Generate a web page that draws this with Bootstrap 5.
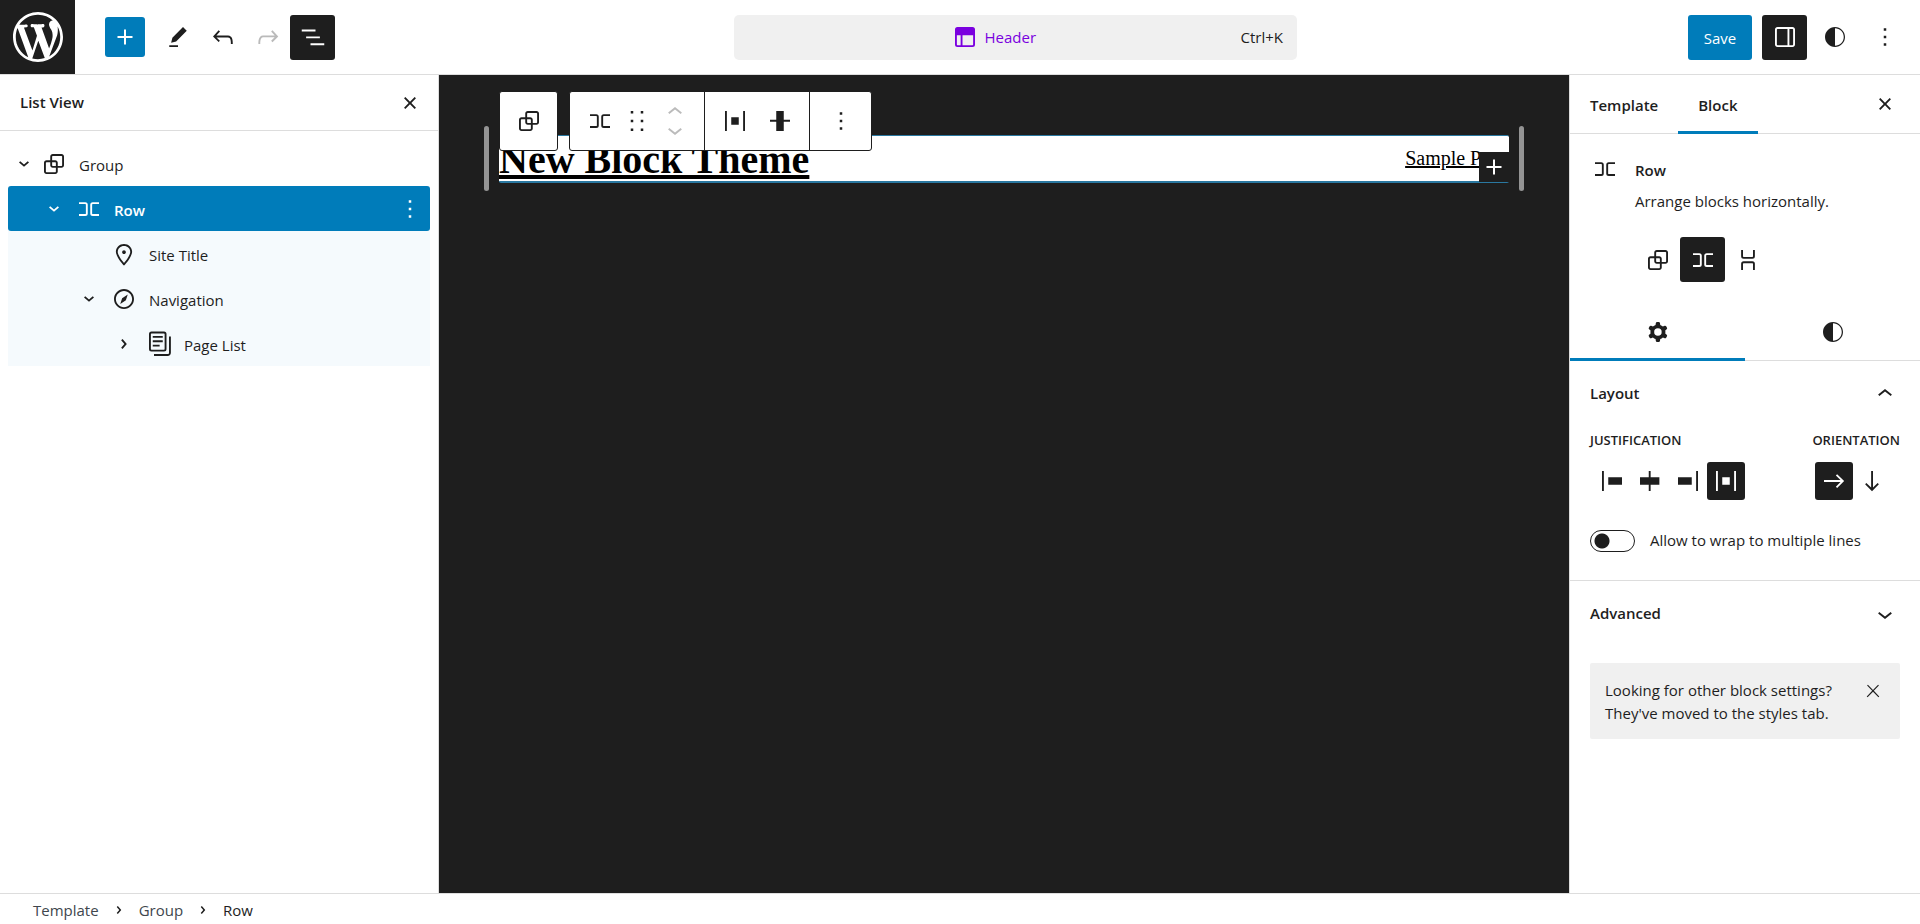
<!DOCTYPE html>
<html lang="en">
<head>
<meta charset="utf-8">
<meta name="viewport" content="width=device-width, initial-scale=1">
<title>Header – Editor</title>
<link href="https://cdn.jsdelivr.net/npm/bootstrap@5.3.0/dist/css/bootstrap.min.css" rel="stylesheet">
<style>
:root { --ink: #1e1e1e; --accent: #007cba; --line: #ddd; --soft: #f0f0f0; }
body { font-family: "Open Sans", "Noto Sans", sans-serif; font-size: 15px; line-height: 23px; color: var(--ink); background: #fff; }
.glyph { width: 30px; height: 30px; fill: currentColor; flex: none; display: block; }
.btn { --bs-btn-font-size: 15px; --bs-btn-line-height: 23px; --bs-btn-color: var(--ink); --bs-btn-hover-color: var(--accent); --bs-btn-active-border-color: transparent; --bs-btn-border-radius: 3px; --bs-btn-border-width: 0; --bs-btn-disabled-border-color: transparent; }
.tool { width: 45px; height: 45px; padding: 0; display: flex; align-items: center; justify-content: center; flex: none; }
.tool.tool-sm { width: 38px; height: 38px; }
.tool.tool-add { width: 40px; height: 40px; margin-right: 10px; }
.tool.is-on { background: var(--ink); color: #fff; }
.tool.is-blue, .btn-save { background: var(--accent); color: #fff; }
.tool:disabled { color: #1e1e1e; opacity: .3; }
.btn-save { height: 45px; width: 64px; padding: 2px 0 0; margin-right: 5px; }
.strong-ish { font-weight: 600; }

.topbar { height: 75px; border-bottom: 1px solid var(--line); padding-right: 13px; }
.brand-tile { width: 75px; height: 74px; background: var(--ink); color: #fff; }
.brand-tile svg { width: 60px; height: 60px; fill: currentColor; }
.tools-left { padding-left: 30px; }
.tools-right { gap: 5px; }
.command { width: 563px; height: 45px; background: var(--soft); border: 0; border-radius: 5px; padding: 0 14px 0 12px; color: var(--ink); }
.command .doc { color: #7a00df; }

.side-left { width: 439px; border-right: 1px solid var(--line); }
.side-head { height: 56px; border-bottom: 1px solid var(--line); padding: 0 6px 0 20px; }
.tree { padding: 10px 8px; }
.tree-row { height: 45px; }
.tree-row .btn { padding: 0; border-radius: 0; color: inherit; }
.tree-row .twist { width: 30px; height: 30px; flex: none; margin-right: 5px; }
.tree-row .tree-label { display: flex; flex-grow: 1; align-items: center; gap: 10px; text-align: left; }
.tree-row .tree-label span { padding-top: 3px; }
.tree-row .tool { width: 40px; }
.lvl-1 { padding-left: 1px; }
.lvl-1 .twist { margin-right: 0; }
.lvl-2 { padding-left: 31px; }
.lvl-3 { padding-left: 66px; }
.lvl-4 { padding-left: 101px; }
.tree-row.is-selected { background: var(--accent); color: #fff; border-radius: 3px; }
.tree-branch { background: #f5fafd; }

.canvas { background: var(--ink); padding: 51px 45px 0; }
.frame { gap: 10px; }
.grip { width: 5px; height: 65px; border-radius: 3px; background: #949494; flex: none; }
.sheet { background: #fff; height: 48px; border: solid #2a78a0; border-width: 1px 0 2px; border-radius: 2px; font-family: "Liberation Serif", serif; color: #000; }
.sheet a { color: #000; }
.site-name { font-size: 40px; line-height: 48px; font-weight: 700; margin: 0; text-decoration-thickness: 4px; }
.site-nav { font-size: 20px; line-height: 45px; }
.block-tools { top: -45px; left: 0; gap: 11px; color: var(--ink); }
.tool-box { background: #fff; border: 1px solid var(--ink); border-radius: 3px; height: 60px; }
.tool-box > div { display: flex; align-items: center; padding: 0 7px; }
.tool-box > div:only-child { padding: 0 6px; }
.tool-box > div + div { border-left: 1px solid var(--ink); }
.tool-box > div + div:last-child { padding: 0 8px; }
.tool-box .tool { color: var(--ink); }
.tool-box .drag { width: 30px; }
.tool-box .movers { width: 45px; }
.movers .btn { height: 18px; width: 45px; padding: 0; display: flex; justify-content: center; align-items: center; color: #bbb; }
.appender { right: 0; bottom: -1px; width: 30px; height: 30px; padding: 0; background: var(--ink); color: #fff; border-radius: 0; }

.side-right { width: 351px; border-left: 1px solid var(--line); }
.panel-tabs { height: 59px; border-bottom: 1px solid var(--line); padding-right: 13px; }
.panel-tabs .tab, .sub-tabs .tab { border: 0; border-radius: 0; border-bottom: 3px solid transparent; }
.panel-tabs .tab { height: 59px; padding: 5px 20px 0; }
.panel-tabs .tab.is-current, .sub-tabs .tab.is-current { border-bottom: 3px solid var(--accent); }
.block-card { padding: 20px 20px 0; gap: 15px; }
.block-card h2 { font-size: 15px; line-height: 32px; margin: 0; }
.block-card p { margin: 1px 0 0; line-height: 28px; }
.variations { padding: 22px 65px 20px; }
.sub-tabs { height: 59px; border-bottom: 1px solid var(--line); }
.sub-tabs .tab { height: 59px; padding: 3px 0 0; }
.panel-title { font-size: 15px; margin: 0; }
.panel-title .btn { width: 100%; height: 65px; padding: 0 20px; display: flex; align-items: center; justify-content: space-between; }
.panel-body { border-bottom: 1px solid var(--line); }
.caption { font-size: 13px; line-height: 20px; font-weight: 600; float: none; margin: 0; padding: 4px 0 12px; white-space: nowrap; }
.choice { padding-left: 3px; }
.wrap-switch { padding: 29px 20px 28px; gap: 15px; }
.wrap-switch .form-check-input { width: 45px; height: 22px; margin: 0; float: none; border: 1px solid var(--ink); border-radius: 11px; background: radial-gradient(circle at 11px 10px, var(--ink) 7px, transparent 8px); }
.tip { background: var(--soft); margin: 17px 20px; padding: 16px 15px 14px; border-radius: 2px; }
.tip .btn { width: 24px; height: 24px; padding: 0; display: flex; align-items: center; justify-content: center; }
.tip svg { width: 20px; height: 20px; }

.crumb-bar { height: 31px; border-top: 1px solid var(--line); padding: 4px 33px 0; }
.crumb-bar ol { margin: 0; padding: 0; list-style: none; display: flex; align-items: center; }
.crumb-bar .btn { padding: 0; display: block; color: #40464d; }
.crumb-bar .glyph { width: 30px; height: 24px; margin: 0 5px; }
</style>
</head>
<body class="vh-100 d-flex flex-column overflow-hidden">

<svg class="d-none" aria-hidden="true">
  <symbol id="i-plus" viewBox="0 0 24 24"><path d="M18 11.2h-5.2V6h-1.6v5.2H6v1.6h5.2V18h1.6v-5.2H18z"/></symbol>
  <symbol id="i-edit" viewBox="0 0 24 24"><path d="m19 7-3-3-8.500 8.500-1 4 4-1L19 7Zm-7 11.500H5V20h7v-1.500Z"/></symbol>
  <symbol id="i-undo" viewBox="0 0 24 24"><path d="M18.3 11.7c-.6-.6-1.4-.9-2.3-.9H6.700l2.900-3.300-1.100-1-4.500 5L8.500 16l1-1-2.700-2.700H16c.5 0 .9.2 1.300.5 1 1 1 3.400 1 4.500v.3h1.500v-.2c0-1.500 0-4.300-1.500-5.700z"/></symbol>
  <symbol id="i-redo" viewBox="0 0 24 24"><path d="M15.600 6.500l-1.100 1 2.900 3.300H8c-.9 0-1.700.3-2.300.9-1.400 1.500-1.400 4.200-1.400 5.600v.2h1.500v-.3c0-1.100 0-3.500 1-4.500.3-.3.7-.5 1.300-.5h9.200L14.500 15l1.100 1.100 4.600-4.600-4.600-5z"/></symbol>
  <symbol id="i-list" viewBox="0 0 24 24"><path d="M3 6h11v1.500H3V6Zm3.500 5.500h11V13h-11v-1.500ZM21 17H10v1.500h11V17Z"/></symbol>
  <symbol id="i-close" viewBox="0 0 24 24"><path d="M12 13.060l3.712 3.713 1.061-1.060L13.061 12l3.712-3.712-1.060-1.060L12 10.938 8.288 7.227l-1.061 1.060L10.939 12l-3.712 3.712 1.060 1.061L12 13.061z"/></symbol>
  <symbol id="i-close-thin" viewBox="0 0 24 24"><path d="M13 11.800l6.100-6.300-1-1-6.100 6.200-6.100-6.200-1 1 6.100 6.300-6.500 6.700 1 1 6.500-6.600 6.500 6.600 1-1z"/></symbol>
  <symbol id="i-group" viewBox="0 0 24 24"><path d="M18 4h-7c-1.100 0-2 .9-2 2v3H6c-1.100 0-2 .9-2 2v7c0 1.100.9 2 2 2h7c1.100 0 2-.9 2-2v-3h3c1.100 0 2-.9 2-2V6c0-1.100-.9-2-2-2zm-4.500 14c0 .3-.2.5-.5.5H6c-.3 0-.5-.2-.5-.5v-7c0-.3.2-.5.5-.5h3V13c0 1.100.9 2 2 2h2.500v3zm0-4.500H11c-.3 0-.5-.2-.5-.5v-2.500H13c.3 0 .5.2.5.5v2.500zm5-.5c0 .3-.2.5-.5.5h-3V11c0-1.100-.9-2-2-2h-2.500V6c0-.3.2-.5.5-.5h7c.3 0 .5.2.5.5v7z"/></symbol>
  <symbol id="i-row" viewBox="0 0 24 24"><path d="M4 6.500h5a2 2 0 0 1 2 2v7a2 2 0 0 1-2 2H4V16h5a.5.5 0 0 0 .5-.5v-7A.5.5 0 0 0 9 8H4V6.500Zm16 0h-5a2 2 0 0 0-2 2v7a2 2 0 0 0 2 2h5V16h-5a.5.5 0 0 1-.5-.5v-7A.5.5 0 0 1 15 8h5V6.500Z"/></symbol>
  <symbol id="i-stack" viewBox="0 0 24 24"><path d="M17.500 4v5a2 2 0 0 1-2 2h-7a2 2 0 0 1-2-2V4H8v5a.5.5 0 0 0 .5.5h7A.5.5 0 0 0 16 9V4h1.500Zm0 16v-5a2 2 0 0 0-2-2h-7a2 2 0 0 0-2 2v5H8v-5a.5.5 0 0 1 .5-.5h7a.5.5 0 0 1 .5.5v5h1.500Z"/></symbol>
  <symbol id="i-marker" viewBox="0 0 24 24"><path d="M12 9c-.8 0-1.500.7-1.500 1.500S11.200 12 12 12s1.500-.7 1.500-1.500S12.800 9 12 9zm0-5c-3.600 0-6.500 2.800-6.500 6.200 0 .8.3 1.800.9 3.100.5 1.100 1.200 2.300 2 3.600.7 1 3 3.800 3.200 3.900l.4.5.4-.5c.2-.2 2.600-2.900 3.200-3.900.8-1.200 1.500-2.500 2-3.600.6-1.300.9-2.300.9-3.100C18.500 6.800 15.600 4 12 4zm4.300 8.700c-.5 1-1.100 2.200-1.900 3.400-.5.7-1.700 2.200-2.400 3-.7-.8-1.900-2.300-2.400-3-.8-1.200-1.400-2.300-1.900-3.300-.6-1.400-.7-2.200-.7-2.500 0-2.600 2.200-4.700 5-4.700s5 2.100 5 4.700c0 .2-.1 1-.7 2.400z"/></symbol>
  <symbol id="i-compass" viewBox="0 0 24 24"><path d="M12 4c-4.400 0-8 3.600-8 8s3.600 8 8 8 8-3.600 8-8-3.600-8-8-8zm0 14.500c-3.600 0-6.500-2.900-6.500-6.500S8.400 5.500 12 5.500s6.500 2.900 6.500 6.500-2.900 6.500-6.500 6.500zM9 16l4.500-3L15 8.400l-4.500 3L9 16z"/></symbol>
  <symbol id="i-pages" viewBox="0 0 24 24"><path d="M15 5.500H7V7h8V5.500ZM7 9h8v1.500H7V9Zm5.500 3.500H7V14h5.500v-1.500Z"/><path fill-rule="evenodd" d="M16 2H6a2 2 0 0 0-2 2v12a2 2 0 0 0 2 2h10a2 2 0 0 0 2-2V4a2 2 0 0 0-2-2ZM6 3.500h10a.5.5 0 0 1 .5.5v12a.5.5 0 0 1-.5.5H6a.5.5 0 0 1-.5-.5V4a.5.5 0 0 1 .5-.5Z"/><path d="M20 6v13c0 .69-.31 1-.999 1H8v1.500h11.001c1.520 0 2.499-.982 2.499-2.500V6H20Z"/></symbol>
  <symbol id="i-drag" viewBox="0 0 24 24"><path d="M7 6h2V4H7v2zm0 7h2v-2H7v2zm0 7h2v-2H7v2zm8-16v2h2V4h-2zm0 9h2v-2h-2v2zm0 7h2v-2h-2v2z"/></symbol>
  <symbol id="i-more" viewBox="0 0 24 24"><path d="M13 19h-2v-2h2v2zm0-6h-2v-2h2v2zm0-6h-2V5h2v2z"/></symbol>
  <symbol id="i-up" viewBox="0 0 24 24"><path d="M6.500 12.400L12 8l5.500 4.400-.9 1.200L12 10l-4.500 3.600-1-1.200z"/></symbol>
  <symbol id="i-down" viewBox="0 0 24 24"><path d="M17.500 11.600L12 16l-5.500-4.400.9-1.200L12 14l4.500-3.600 1 1.200z"/></symbol>
  <symbol id="i-right-s" viewBox="0 0 24 24"><path d="M10.862 8.040L14.280 12.029L10.862 16.017L9.723 15.040L12.305 12.029L9.723 9.017L10.862 8.040Z"/></symbol>
  <symbol id="i-down-s" viewBox="0 0 24 24"><path d="M15.988 10.862L12 14.280L8.012 10.862L8.988 9.723L12 12.305L15.012 9.723L15.988 10.862Z"/></symbol>
  <symbol id="i-jleft" viewBox="0 0 24 24"><path d="M9 9v6h11V9H9zM4 20h1.500V4H4v16z"/></symbol>
  <symbol id="i-jcenter" viewBox="0 0 24 24"><path d="M12.500 15v5H11v-5H4V9h7V4h1.500v5h7v6h-7Z"/></symbol>
  <symbol id="i-jright" viewBox="0 0 24 24"><path d="M4 15h11V9H4v6zM18.500 4v16H20V4h-1.500z"/></symbol>
  <symbol id="i-between" viewBox="0 0 24 24"><path d="M9 15h6V9H9v6zm-5 5h1.500V4H4v16zM18.500 4v16H20V4h-1.500z"/></symbol>
  <symbol id="i-middle" viewBox="0 0 24 24"><path d="M20 11h-5V4H9v7H4v1.500h5V20h6v-7.500h5z"/></symbol>
  <symbol id="i-header" viewBox="0 0 24 24"><path fill-rule="evenodd" d="M18.500 10.500H10v8h8a.5.5 0 0 0 .5-.5v-7.500zm-10 0h-3V18a.5.5 0 0 0 .5.5h2.500v-8zM6 4h12a2 2 0 0 1 2 2v12a2 2 0 0 1-2 2H6a2 2 0 0 1-2-2V6a2 2 0 0 1 2-2z"/></symbol>
  <symbol id="i-drawer" viewBox="0 0 24 24"><path d="M18 4H6c-1.100 0-2 .9-2 2v12c0 1.100.9 2 2 2h12c1.100 0 2-.9 2-2V6c0-1.100-.9-2-2-2zm-4 14.500H6c-.3 0-.5-.2-.5-.5V6c0-.3.2-.5.5-.5h8v13zm4.500-.5c0 .3-.2.5-.5.5h-2.500v-13H18c.3 0 .5.2.5.5v12z"/></symbol>
  <symbol id="i-styles" viewBox="0 0 24 24"><path d="M12 4c-4.400 0-8 3.600-8 8s3.600 8 8 8 8-3.600 8-8-3.600-8-8-8zm0 15V5c3.900 0 7 3.100 7 7s-3.100 7-7 7z"/></symbol>
  <symbol id="i-cog" viewBox="0 0 24 24"><path fill-rule="evenodd" d="M10.289 4.836A1 1 0 0 1 11.275 4h1.306a1 1 0 0 1 .987.836l.244 1.466c.787.26 1.503.679 2.108 1.218l1.393-.522a1 1 0 0 1 1.216.437l.653 1.130a1 1 0 0 1-.23 1.273l-1.148.944a6.025 6.025 0 0 1 0 2.435l1.149.946a1 1 0 0 1 .23 1.272l-.653 1.130a1 1 0 0 1-1.216.437l-1.394-.522c-.605.54-1.320.958-2.108 1.218l-.244 1.466a1 1 0 0 1-.987.836h-1.306a1 1 0 0 1-.986-.836l-.244-1.466a5.995 5.995 0 0 1-2.108-1.218l-1.394.522a1 1 0 0 1-1.217-.436l-.653-1.131a1 1 0 0 1 .23-1.272l1.149-.946a6.026 6.026 0 0 1 0-2.435l-1.148-.944a1 1 0 0 1-.23-1.272l.653-1.131a1 1 0 0 1 1.217-.437l1.393.522a5.994 5.994 0 0 1 2.108-1.218l.244-1.466zM14.929 12a3 3 0 1 1-6 0 3 3 0 0 1 6 0z"/></symbol>
  <symbol id="i-aright" viewBox="0 0 24 24"><path d="m14.500 6.500-1 1 3.700 3.700H4v1.600h13.200l-3.700 3.700 1 1 5.600-5.500z"/></symbol>
  <symbol id="i-adown" viewBox="0 0 24 24"><path d="m16.500 13.500-3.700 3.700V4h-1.500v13.200l-3.800-3.700-1 1 5.500 5.600 5.500-5.600z"/></symbol>
  <symbol id="i-wp" viewBox="-2 -2 24 24"><path d="M20 10c0-5.510-4.490-10-10-10C4.480 0 0 4.490 0 10c0 5.520 4.480 10 10 10 5.510 0 10-4.480 10-10zM7.780 15.370L4.370 6.220c.55-.02 1.170-.08 1.170-.08.5-.06.44-1.130-.06-1.110 0 0-1.450.11-2.370.11-.18 0-.37 0-.58-.01C4.120 2.690 6.870 1.110 10 1.110c2.330 0 4.450.87 6.050 2.340-.68-.11-1.650.39-1.650 1.580 0 .74.45 1.360.9 2.100.35.61.55 1.360.55 2.460 0 1.490-1.400 5-1.400 5l-3.030-8.370c.54-.02.82-.17.82-.17.5-.05.44-1.250-.06-1.220 0 0-1.440.12-2.380.12-.87 0-2.330-.12-2.330-.12-.5-.03-.56 1.200-.06 1.220l.92.08 1.260 3.410zM17.410 10c.24-.64.74-1.870.43-4.250.7 1.290 1.050 2.710 1.050 4.250 0 3.290-1.730 6.240-4.400 7.780.97-2.590 1.940-5.200 2.920-7.780zM6.100 18.090C3.120 16.650 1.110 13.530 1.110 10c0-1.300.23-2.480.72-3.590C3.250 10.300 4.670 14.200 6.100 18.090zm4.030-6.630l2.580 6.980c-.86.29-1.760.45-2.710.45-.79 0-1.570-.11-2.290-.33.81-2.380 1.620-4.740 2.420-7.100z"/></symbol>
</svg>

<header class="topbar d-flex align-items-center flex-shrink-0">
  <a href="#" class="brand-tile d-flex align-items-center justify-content-center flex-shrink-0" aria-label="Open navigation"><svg><use href="#i-wp"/></svg></a>
  <div class="tools-left d-flex align-items-center">
    <button type="button" class="btn tool tool-add is-blue" aria-label="Toggle block inserter"><svg class="glyph"><use href="#i-plus"/></svg></button>
    <button type="button" class="btn tool" aria-label="Tools"><svg class="glyph"><use href="#i-edit"/></svg></button>
    <button type="button" class="btn tool" aria-label="Undo"><svg class="glyph"><use href="#i-undo"/></svg></button>
    <button type="button" class="btn tool" aria-label="Redo" disabled><svg class="glyph"><use href="#i-redo"/></svg></button>
    <button type="button" class="btn tool is-on" aria-label="List View"><svg class="glyph"><use href="#i-list"/></svg></button>
  </div>
  <div class="flex-grow-1 d-flex justify-content-center ps-3 pe-2">
    <button type="button" class="command d-flex align-items-center">
      <span class="doc flex-grow-1 d-flex align-items-center justify-content-center gap-1"><svg class="glyph"><use href="#i-header"/></svg><span>Header</span></span>
      <span>Ctrl+K</span>
    </button>
  </div>
  <div class="tools-right d-flex align-items-center">
    <button type="button" class="btn btn-save">Save</button>
    <button type="button" class="btn tool is-on" aria-label="Settings"><svg class="glyph"><use href="#i-drawer"/></svg></button>
    <button type="button" class="btn tool" aria-label="Styles"><svg class="glyph"><use href="#i-styles"/></svg></button>
    <button type="button" class="btn tool" aria-label="Options"><svg class="glyph"><use href="#i-more"/></svg></button>
  </div>
</header>

<div class="d-flex flex-grow-1 overflow-hidden">
  <aside class="side-left flex-shrink-0">
    <div class="side-head d-flex align-items-center justify-content-between">
      <span class="strong-ish">List View</span>
      <button type="button" class="btn tool" aria-label="Close"><svg class="glyph"><use href="#i-close"/></svg></button>
    </div>
    <ul class="tree list-unstyled mb-0">
      <li>
        <div class="tree-row lvl-1 d-flex align-items-center">
          <button type="button" class="btn twist" aria-label="Collapse Group"><svg class="glyph"><use href="#i-down-s"/></svg></button>
          <button type="button" class="btn tree-label"><svg class="glyph"><use href="#i-group"/></svg><span>Group</span></button>
        </div>
        <ul class="list-unstyled tree-branch">
          <li>
            <div class="tree-row lvl-2 is-selected d-flex align-items-center">
              <button type="button" class="btn twist" aria-label="Collapse Row"><svg class="glyph"><use href="#i-down-s"/></svg></button>
              <button type="button" class="btn tree-label strong-ish"><svg class="glyph"><use href="#i-row"/></svg><span>Row</span></button>
              <button type="button" class="btn tool" aria-label="Options for Row"><svg class="glyph"><use href="#i-more"/></svg></button>
            </div>
            <ul class="list-unstyled">
              <li>
                <div class="tree-row lvl-3 d-flex align-items-center">
                  <div class="twist"></div>
                  <button type="button" class="btn tree-label"><svg class="glyph"><use href="#i-marker"/></svg><span>Site Title</span></button>
                </div>
              </li>
              <li>
                <div class="tree-row lvl-3 d-flex align-items-center">
                  <button type="button" class="btn twist" aria-label="Collapse Navigation"><svg class="glyph"><use href="#i-down-s"/></svg></button>
                  <button type="button" class="btn tree-label"><svg class="glyph"><use href="#i-compass"/></svg><span>Navigation</span></button>
                </div>
                <ul class="list-unstyled">
                  <li>
                    <div class="tree-row lvl-4 d-flex align-items-center">
                      <button type="button" class="btn twist" aria-label="Expand Page List"><svg class="glyph"><use href="#i-right-s"/></svg></button>
                      <button type="button" class="btn tree-label"><svg class="glyph"><use href="#i-pages"/></svg><span>Page List</span></button>
                    </div>
                  </li>
                </ul>
              </li>
            </ul>
          </li>
        </ul>
      </li>
    </ul>
  </aside>

  <main class="canvas flex-grow-1">
    <div class="frame d-flex align-items-center justify-content-between">
      <div class="grip"></div>
      <div class="sheet position-relative flex-grow-1 d-flex justify-content-between">
        <h1 class="site-name"><a href="#">New Block Theme</a></h1>
        <nav class="site-nav"><a href="#">Sample Page</a></nav>
        <div class="block-tools position-absolute d-flex">
          <div class="tool-box d-flex">
            <div><button type="button" class="btn tool" aria-label="Select Group"><svg class="glyph"><use href="#i-group"/></svg></button></div>
          </div>
          <div class="tool-box d-flex">
            <div>
              <button type="button" class="btn tool" aria-label="Row"><svg class="glyph"><use href="#i-row"/></svg></button>
              <button type="button" class="btn tool drag" aria-label="Drag"><svg class="glyph"><use href="#i-drag"/></svg></button>
              <div class="movers">
                <button type="button" class="btn" aria-label="Move up"><svg class="glyph"><use href="#i-up"/></svg></button>
                <button type="button" class="btn" aria-label="Move down"><svg class="glyph"><use href="#i-down"/></svg></button>
              </div>
            </div>
            <div>
              <button type="button" class="btn tool" aria-label="Change items justification"><svg class="glyph"><use href="#i-between"/></svg></button>
              <button type="button" class="btn tool" aria-label="Align"><svg class="glyph"><use href="#i-middle"/></svg></button>
            </div>
            <div><button type="button" class="btn tool" aria-label="Options"><svg class="glyph"><use href="#i-more"/></svg></button></div>
          </div>
        </div>
        <button type="button" class="btn appender position-absolute" aria-label="Add block"><svg class="glyph"><use href="#i-plus"/></svg></button>
      </div>
      <div class="grip"></div>
    </div>
  </main>

  <aside class="side-right flex-shrink-0">
    <div class="panel-tabs d-flex align-items-center">
      <button type="button" class="btn tab strong-ish">Template</button>
      <button type="button" class="btn tab is-current strong-ish">Block</button>
      <button type="button" class="btn tool ms-auto" aria-label="Close Settings"><svg class="glyph"><use href="#i-close"/></svg></button>
    </div>
    <div class="block-card d-flex">
      <svg class="glyph"><use href="#i-row"/></svg>
      <div>
        <h2 class="strong-ish">Row</h2>
        <p>Arrange blocks horizontally.</p>
      </div>
    </div>
    <div class="variations d-flex">
      <button type="button" class="btn tool" aria-label="Group"><svg class="glyph"><use href="#i-group"/></svg></button>
      <button type="button" class="btn tool is-on" aria-label="Row"><svg class="glyph"><use href="#i-row"/></svg></button>
      <button type="button" class="btn tool" aria-label="Stack"><svg class="glyph"><use href="#i-stack"/></svg></button>
    </div>
    <div class="sub-tabs d-flex">
      <button type="button" class="btn tab is-current w-50 d-flex align-items-center justify-content-center" aria-label="Settings"><svg class="glyph"><use href="#i-cog"/></svg></button>
      <button type="button" class="btn tab w-50 d-flex align-items-center justify-content-center" aria-label="Styles"><svg class="glyph"><use href="#i-styles"/></svg></button>
    </div>
    <section class="panel-body">
      <h2 class="panel-title"><button type="button" class="btn strong-ish">Layout<svg class="glyph"><use href="#i-up"/></svg></button></h2>
      <div class="d-flex justify-content-between px-3 mx-1">
        <fieldset>
          <legend class="caption">JUSTIFICATION</legend>
          <div class="choice d-flex">
            <button type="button" class="btn tool tool-sm" aria-label="Justify items left"><svg class="glyph"><use href="#i-jleft"/></svg></button>
            <button type="button" class="btn tool tool-sm" aria-label="Justify items center"><svg class="glyph"><use href="#i-jcenter"/></svg></button>
            <button type="button" class="btn tool tool-sm" aria-label="Justify items right"><svg class="glyph"><use href="#i-jright"/></svg></button>
            <button type="button" class="btn tool tool-sm is-on" aria-label="Space between items"><svg class="glyph"><use href="#i-between"/></svg></button>
          </div>
        </fieldset>
        <fieldset>
          <legend class="caption">ORIENTATION</legend>
          <div class="choice d-flex">
            <button type="button" class="btn tool tool-sm is-on" aria-label="Horizontal"><svg class="glyph"><use href="#i-aright"/></svg></button>
            <button type="button" class="btn tool tool-sm" aria-label="Vertical"><svg class="glyph"><use href="#i-adown"/></svg></button>
          </div>
        </fieldset>
      </div>
      <div class="wrap-switch d-flex align-items-center">
        <input class="form-check-input" type="checkbox" role="switch" id="allow-wrap">
        <label for="allow-wrap">Allow to wrap to multiple lines</label>
      </div>
    </section>
    <section>
      <h2 class="panel-title"><button type="button" class="btn strong-ish">Advanced<svg class="glyph"><use href="#i-down"/></svg></button></h2>
    </section>
    <div class="tip d-flex align-items-start justify-content-between">
      <span>Looking for other block settings?<br>They've moved to the styles tab.</span>
      <button type="button" class="btn" aria-label="Dismiss"><svg class="glyph"><use href="#i-close-thin"/></svg></button>
    </div>
  </aside>
</div>

<footer class="crumb-bar flex-shrink-0">
  <nav aria-label="Block breadcrumb">
    <ol>
      <li><button type="button" class="btn">Template</button></li>
      <li class="d-flex align-items-center"><svg class="glyph"><use href="#i-right-s"/></svg><button type="button" class="btn">Group</button></li>
      <li class="d-flex align-items-center"><svg class="glyph"><use href="#i-right-s"/></svg><span>Row</span></li>
    </ol>
  </nav>
</footer>

<script src="https://cdn.jsdelivr.net/npm/bootstrap@5.3.0/dist/js/bootstrap.bundle.min.js"></script>
</body>
</html>
